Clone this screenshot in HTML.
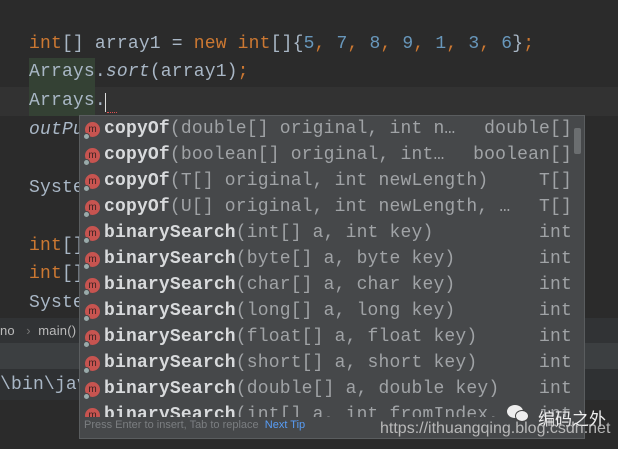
<!DOCTYPE html>
<html><head><meta charset="utf-8"><style>
*{margin:0;padding:0;box-sizing:border-box}
body{width:618px;height:449px;overflow:hidden;background:#2b2b2b;position:relative;font-family:"Liberation Mono","DejaVu Sans Mono",monospace;font-size:18px;letter-spacing:0.18px}
.ln{position:absolute;left:29px;white-space:pre;color:#a9b7c6;line-height:29px;height:29px}
.k{color:#cc7832}.n{color:#6897bb}.i{font-style:italic}.g{background:#344134;display:inline-block;height:29px}
.pop{position:absolute;left:79px;top:115px;width:506px;height:324px;background:#46484a;border:1px solid #5a5d5f;overflow:hidden}
.r{position:absolute;left:0;height:26px;line-height:26px;width:100%;white-space:pre;color:#a0a3a6}
.r .ic{position:absolute;left:5px;top:6px;width:15px;height:15px;border-radius:50%;background:#c75450;color:#3a2222;font:10px "Liberation Sans",sans-serif;line-height:15px;text-align:center;letter-spacing:0}
.r .ic:after{content:"";position:absolute;left:-2px;top:11px;width:5px;height:5px;border-radius:50%;background:#9aa;border:1px solid #46484a}
.r .t{position:absolute;left:24px}
.r b{color:#d8dadc;font-weight:bold}
.r .ty{position:absolute;right:12px;color:#a0a3a6}
</style></head><body>
<div style="position:absolute;left:0;top:87px;width:618px;height:29px;background:#323232"></div>
<div class="ln" style="top:30px"><span class="k">int</span>[] array1 = <span class="k">new int</span>[]{<span class="n">5</span><span class="k">,</span> <span class="n">7</span><span class="k">,</span> <span class="n">8</span><span class="k">,</span> <span class="n">9</span><span class="k">,</span> <span class="n">1</span><span class="k">,</span> <span class="n">3</span><span class="k">,</span> <span class="n">6</span>}<span class="k">;</span></div>
<div class="ln" style="top:58px"><span class="g">Arrays</span>.<span class="i">sort</span>(array1)<span class="k">;</span></div>
<div class="ln" style="top:87px"><span class="g">Arrays</span>.</div>
<div style="position:absolute;left:105px;top:93px;width:1px;height:19px;background:#ddd"></div>
<div style="position:absolute;left:107px;top:110px;width:10px;height:3px;border-bottom:1px dotted #e05050"></div>
<div class="ln i" style="top:116px">outPu</div>
<div class="ln" style="top:174px">Syste</div>
<div class="ln" style="top:232px"><span class="k">int</span>[]</div>
<div class="ln" style="top:260px"><span class="k">int</span>[]</div>
<div class="ln" style="top:289px">Syste</div>
<div style="position:absolute;left:0;top:318px;width:618px;height:25px;background:#313335;color:#bbb;font:13px 'Liberation Sans',sans-serif;line-height:25px;white-space:pre">no   <span style="color:#777">›</span>  main()</div>
<div style="position:absolute;left:0;top:343px;width:618px;height:26px;background:#3c3f41"></div>
<div style="position:absolute;left:0;top:369px;width:618px;height:31px;background:#2f3133"></div>
<div class="ln" style="left:0;top:371px;color:#a9b7c6">\bin\jav</div>
<div class="pop">
<div class="r" style="top:0"><span class="ic">m</span><span class="t"><b>copyOf</b>(double[] original, int n…</span><span class="ty">double[]</span></div>
<div class="r" style="top:26px"><span class="ic">m</span><span class="t"><b>copyOf</b>(boolean[] original, int…</span><span class="ty">boolean[]</span></div>
<div class="r" style="top:52px"><span class="ic">m</span><span class="t"><b>copyOf</b>(T[] original, int newLength)</span><span class="ty">T[]</span></div>
<div class="r" style="top:78px"><span class="ic">m</span><span class="t"><b>copyOf</b>(U[] original, int newLength, …</span><span class="ty">T[]</span></div>
<div class="r" style="top:104px"><span class="ic">m</span><span class="t"><b>binarySearch</b>(int[] a, int key)</span><span class="ty">int</span></div>
<div class="r" style="top:130px"><span class="ic">m</span><span class="t"><b>binarySearch</b>(byte[] a, byte key)</span><span class="ty">int</span></div>
<div class="r" style="top:156px"><span class="ic">m</span><span class="t"><b>binarySearch</b>(char[] a, char key)</span><span class="ty">int</span></div>
<div class="r" style="top:182px"><span class="ic">m</span><span class="t"><b>binarySearch</b>(long[] a, long key)</span><span class="ty">int</span></div>
<div class="r" style="top:208px"><span class="ic">m</span><span class="t"><b>binarySearch</b>(float[] a, float key)</span><span class="ty">int</span></div>
<div class="r" style="top:234px"><span class="ic">m</span><span class="t"><b>binarySearch</b>(short[] a, short key)</span><span class="ty">int</span></div>
<div class="r" style="top:260px"><span class="ic">m</span><span class="t"><b>binarySearch</b>(double[] a, double key)</span><span class="ty">int</span></div>
<div style="position:absolute;top:286px;left:0;width:100%;height:15px;overflow:hidden"><div class="r" style="top:0"><span class="ic">m</span><span class="t"><b>binarySearch</b>(int[] a, int fromIndex, …</span><span class="ty">int</span></div></div>
<div style="position:absolute;right:3px;top:12px;width:7px;height:26px;background:#6b6e70;border-radius:2px"></div>
<div style="position:absolute;left:4px;top:303px;font:11px 'Liberation Sans',sans-serif;color:#7b7e81;white-space:pre;letter-spacing:0">Press Enter to insert, Tab to replace  <span style="color:#589df6">Next Tip</span></div>
</div>
<div style="position:absolute;left:507px;top:405px;width:22px;height:18px"><div style="position:absolute;left:0;top:0;width:16px;height:13px;border-radius:50%;background:#eee"></div><div style="position:absolute;left:8px;top:5px;width:14px;height:12px;border-radius:50%;background:#eee;border:1px solid #444"></div></div>
<div style="position:absolute;left:538px;top:405px;color:#eee;font:17px 'Liberation Sans','Noto Sans CJK SC',sans-serif;letter-spacing:0">编码之外</div>
<div style="position:absolute;left:380px;top:420px;color:#ccc;font:16px 'Liberation Sans',sans-serif;opacity:.85;letter-spacing:0">https://ithuangqing.blog.csdn.net</div>
</body></html>
